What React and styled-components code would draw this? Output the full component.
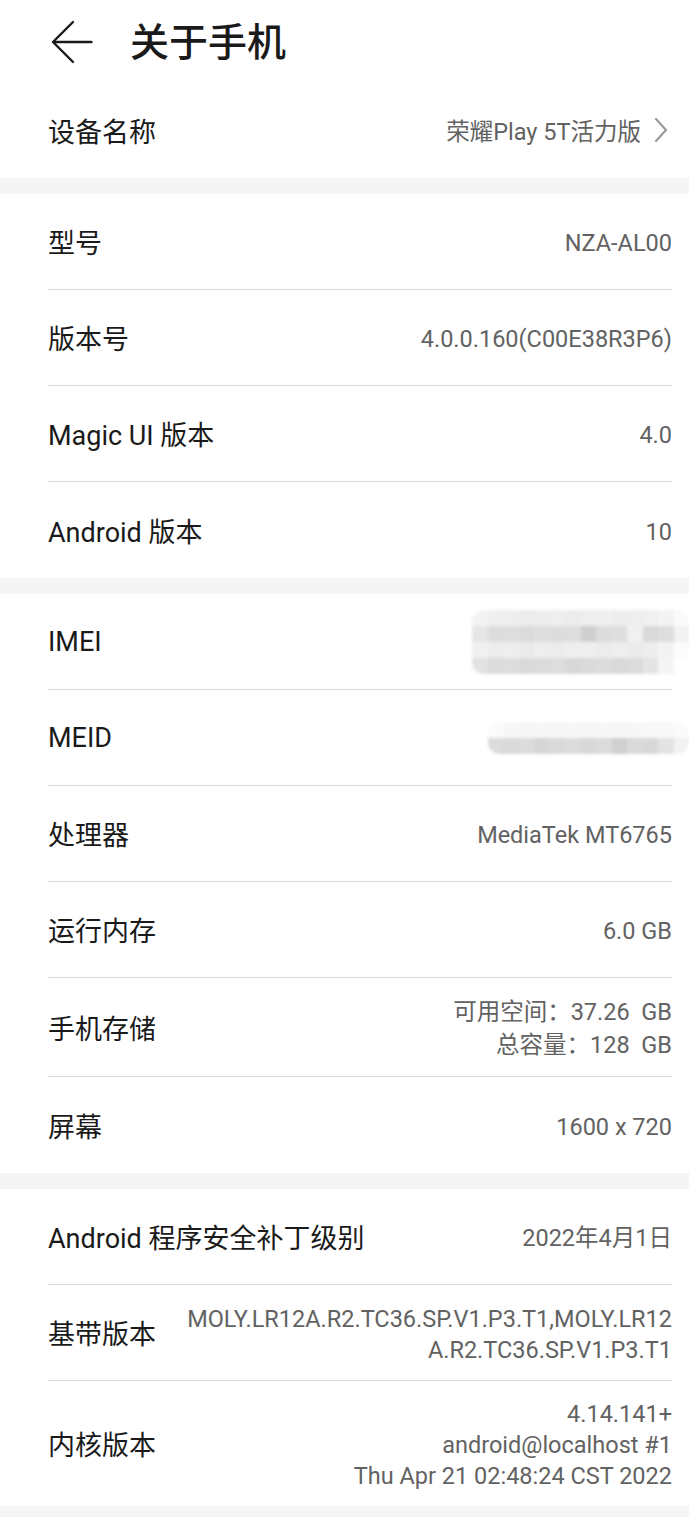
import styled, { createGlobalStyle } from 'styled-components';

const GlobalStyle = createGlobalStyle`
  html, body {
    margin: 0;
    padding: 0;
    background: #f5f5f5;
  }
  body {
    font-family: Roboto, "Noto Sans CJK SC", sans-serif;
    color: #1a1a1a;
  }
  * { box-sizing: border-box; }
`;

const sections = [
  [{ label: '设备名称', value: ['荣耀Play 5T活力版'], link: true }],
  [
    { label: '型号', value: ['NZA-AL00'] },
    { label: '版本号', value: ['4.0.0.160(C00E38R3P6)'] },
    { label: 'Magic UI 版本', value: ['4.0'] },
    { label: 'Android 版本', value: ['10'] },
  ],
  [
    { label: 'IMEI', mosaic: 'imei' },
    { label: 'MEID', mosaic: 'meid' },
    { label: '处理器', value: ['MediaTek MT6765'] },
    { label: '运行内存', value: ['6.0 GB'] },
    { label: '手机存储', value: ['可用空间：37.26  GB', '总容量：128  GB'], tall: true },
    { label: '屏幕', value: ['1600 x 720'] },
  ],
  [
    { label: 'Android 程序安全补丁级别', value: ['2022年4月1日'] },
    { label: '基带版本', value: ['MOLY.LR12A.R2.TC36.SP.V1.P3.T1,MOLY.LR12', 'A.R2.TC36.SP.V1.P3.T1'] },
    { label: '内核版本', value: ['4.14.141+', 'android@localhost #1', 'Thu Apr 21 02:48:24 CST 2022'] },
  ],
];

const mosaics = {
  imei: [
    ['#f3f3f3', '#efefef', '#eeeeee', '#ececec', '#ededed', '#eeeeee', '#ececec', '#eeeeee', '#efefef', '#ededed', '#eeeeee', '#f0f0f0', '#f3f3f3', '#fafafa'],
    ['#e6e6e6', '#dcdcdc', '#dddddd', '#dbdbdb', '#dedede', '#dcdcdc', '#dddddd', '#cfcfcf', '#dcdcdc', '#dedede', '#f0f0f0', '#dadada', '#dddddd', '#f2f2f2'],
    ['#f0f0f0', '#ececec', '#eeeeee', '#ebebeb', '#eeeeee', '#ececec', '#eeeeee', '#eeeeee', '#ececec', '#eeeeee', '#ebebeb', '#ededed', '#f3f3f3', '#fbfbfb'],
    ['#e2e2e2', '#dcdcdc', '#dddddd', '#dadada', '#dbdbdb', '#dddddd', '#d8d8d8', '#dadada', '#dcdcdc', '#d9d9d9', '#dbdbdb', '#e4e4e4', '#f4f4f4', '#ffffff'],
  ],
  meid: [
    ['#fbfbfb', '#f7f7f7', '#f6f6f6', '#f7f7f7', '#f6f6f6', '#f7f7f7', '#f6f6f6', '#f7f7f7', '#f6f6f6', '#f7f7f7', '#f8f8f8', '#f8f8f8', '#fafafa'],
    ['#dcdcdc', '#d9d9d9', '#dcdcdc', '#d6d6d6', '#dadada', '#dcdcdc', '#d8d8d8', '#dbdbdb', '#d0d0d0', '#dadada', '#d8d8d8', '#e3e3e3', '#f2f2f2'],
  ],
};

const BackArrow = () => (
  <svg width="42" height="44" viewBox="0 0 42 44" fill="none">
    <path d="M2 22H40.5M22 2L2 22l20 20" stroke="#1a1a1a" strokeWidth="2.4" strokeLinecap="round" strokeLinejoin="round" />
  </svg>
);

const Chevron = () => (
  <svg width="16" height="26" viewBox="0 0 16 26" fill="none">
    <path d="M3 2l10 11L3 24" stroke="#9a9a9a" strokeWidth="2.2" strokeLinecap="round" strokeLinejoin="round" />
  </svg>
);

const Mosaic = ({ rows, offsetLeft }) => (
  <MosaicBox $offset={offsetLeft}>
    {rows.map((row, i) => (
      <MosaicRow key={i}>
        {row.map((c, j) => (
          <MosaicCell key={j} style={{ background: c }} />
        ))}
      </MosaicRow>
    ))}
  </MosaicBox>
);

const App = () => (
  <>
    <GlobalStyle />
    <Page>
      <Header>
        <BackButton><BackArrow /></BackButton>
        <Title>关于手机</Title>
      </Header>
      {sections.map((items, si) => (
        <Section key={si}>
          {items.map((item, i) => (
            <Row key={item.label} $last={i === items.length - 1}>
              <Label>{item.label}</Label>
              {item.mosaic ? (
                <Mosaic rows={mosaics[item.mosaic]} offsetLeft={item.mosaic === 'meid' ? 15 : 0} />
              ) : (
                <Value $tall={item.tall}>
                  {item.value.map(line => <div key={line}>{line}</div>)}
                </Value>
              )}
              {item.link && <ChevronWrap><Chevron /></ChevronWrap>}
            </Row>
          ))}
        </Section>
      ))}
    </Page>
  </>
);

const Page = styled.div`
  width: 689px;
  min-height: 1517px;
  background: #f5f5f5;
  display: flex;
  flex-direction: column;
  gap: 16px;
`;

const Header = styled.header`
  height: 82px;
  margin-bottom: -16px;
  background: #fff;
  display: flex;
  align-items: center;
  padding: 6px 0 2px 51px;
  gap: 37px;
  position: relative;
  z-index: 1;
`;

const BackButton = styled.button`
  border: 0;
  background: none;
  padding: 0;
  display: flex;
  margin-top: -2px;
`;

const Title = styled.h1`
  margin: 0;
  font-size: 39px;
  line-height: 1;
  font-weight: 500;
  color: #1a1a1a;
`;

const Section = styled.section`
  background: #fff;
  padding: 0 17px 0 48px;
  position: relative;
  z-index: 1;
`;

const Row = styled.div`
  display: flex;
  align-items: center;
  justify-content: space-between;
  gap: 24px;
  min-height: 96px;
  padding: 18px 0 14px;
  border-bottom: ${p => (p.$last ? 'none' : '1px solid #d6d6d6')};
`;

const Label = styled.div`
  font-size: 27px;
  color: #1a1a1a;
  white-space: nowrap;
  margin-top: -4px;
`;

const Value = styled.div`
  flex: 1;
  text-align: right;
  font-size: 23.5px;
  line-height: ${p => (p.$tall ? '33px' : '31px')};
  color: #626262;
  white-space: pre;
`;

const ChevronWrap = styled.div`
  display: flex;
  margin-left: -12px;
  margin-right: 3px;
  margin-top: -4px;
`;

const MosaicBox = styled.div`
  display: flex;
  flex-direction: column;
  margin-right: -17px;
  margin-left: ${p => p.$offset}px;
  margin-top: -4px;
  filter: blur(1.5px);
  border-radius: 12px;
  overflow: hidden;
`;

const MosaicRow = styled.div`
  display: flex;
`;

const MosaicCell = styled.div`
  width: 15.5px;
  height: 16px;
`;

export default App;
